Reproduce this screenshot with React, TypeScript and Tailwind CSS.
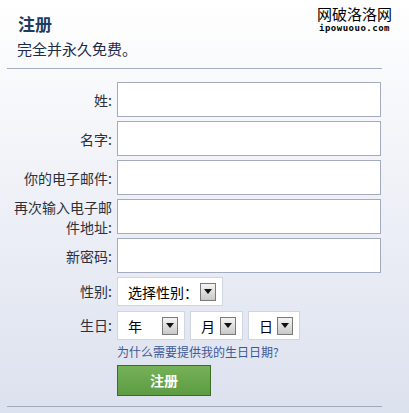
const font = "font-['Noto_Sans_CJK_SC','Noto_Sans',sans-serif]"

const Arrow = () => (
  <span className="flex h-[18px] w-[16px] items-center justify-center border border-[#7a7a7a] bg-gradient-to-b from-[#f4f4f4] to-[#c9c9c9]">
    <svg width="8" height="5" viewBox="0 0 8 5">
      <path d="M0 0h8L4 5z" fill="#111" />
    </svg>
  </span>
)

type SelectProps = {
  label: string
  width: string
}

const FakeSelect = ({ label, width }: SelectProps) => (
  <div className={`flex h-[29px] items-center justify-between border border-[#cfd6e2] bg-white pl-[10px] pr-[6px] ${width}`}>
    <span className="text-[14px] leading-none text-black">{label}</span>
    <Arrow />
  </div>
)

const fields = ['姓:', '名字:', '你的电子邮件:', '再次输入电子邮件地址:', '新密码:']

const App = () => {
  return (
    <div className={`relative h-[413px] w-[409px] overflow-hidden bg-gradient-to-b from-white to-[#dce1ee] ${font}`}>
      <div className="absolute right-[17px] top-[6px] text-center leading-none">
        <div className="text-[15px] text-black">网破洛洛网</div>
        <div className="mt-[3px] font-['DejaVu_Sans_Mono',monospace] text-[9px] font-bold tracking-[0.5px] text-black">ipowuouo.com</div>
      </div>

      <div className="px-[18px] pt-[12px]">
        <h1 className="text-[17px] font-bold leading-[24px] text-[#1f3b61]">注册</h1>
        <p className="-ml-[1px] mt-[2px] text-[15px] leading-[22px] text-[#1c2b48]">完全并永久免费。</p>
      </div>
      <div className="ml-[7px] mt-[8px] w-[375px] border-t border-[#a3adbf]" />

      <div className="mt-[13px] grid grid-cols-[98px_264px] gap-x-[5px] gap-y-[4px] pl-[14px]">
        {fields.map((f) => (
          <div key={f} className="contents">
            <label className="flex h-[35px] items-center justify-end text-right text-[14px] leading-[20px] text-[#2b303b]">
              <span className="break-all">{f}</span>
            </label>
            <div className="h-[35px] border border-[#a3acbe] bg-white" />
          </div>
        ))}

        <label className="flex items-center justify-end text-[14px] text-[#2b303b]">性别:</label>
        <div className="flex">
          <FakeSelect label="选择性别：" width="w-[106px]" />
        </div>

        <label className="mt-[1px] flex items-center justify-end text-[14px] text-[#2b303b]">生日:</label>
        <div className="mt-[1px] flex gap-[5px]">
          <FakeSelect label="年" width="w-[68px]" />
          <FakeSelect label="月" width="w-[53px]" />
          <FakeSelect label="日" width="w-[52px]" />
        </div>

        <div />
        <div>
          <a className="block text-[12px] leading-[16px] text-[#3b5998]">为什么需要提供我的生日日期?</a>
          <button className="mt-[5px] h-[31px] w-[94px] border border-[#3d6d23] bg-gradient-to-b from-[#74b157] to-[#5e9c43] text-[14px] font-bold text-white">
            注册
          </button>
        </div>
      </div>

      <div className="ml-[7px] mt-[10px] w-[375px] border-t border-[#a3a9b9]" />
    </div>
  )
}

export default App
